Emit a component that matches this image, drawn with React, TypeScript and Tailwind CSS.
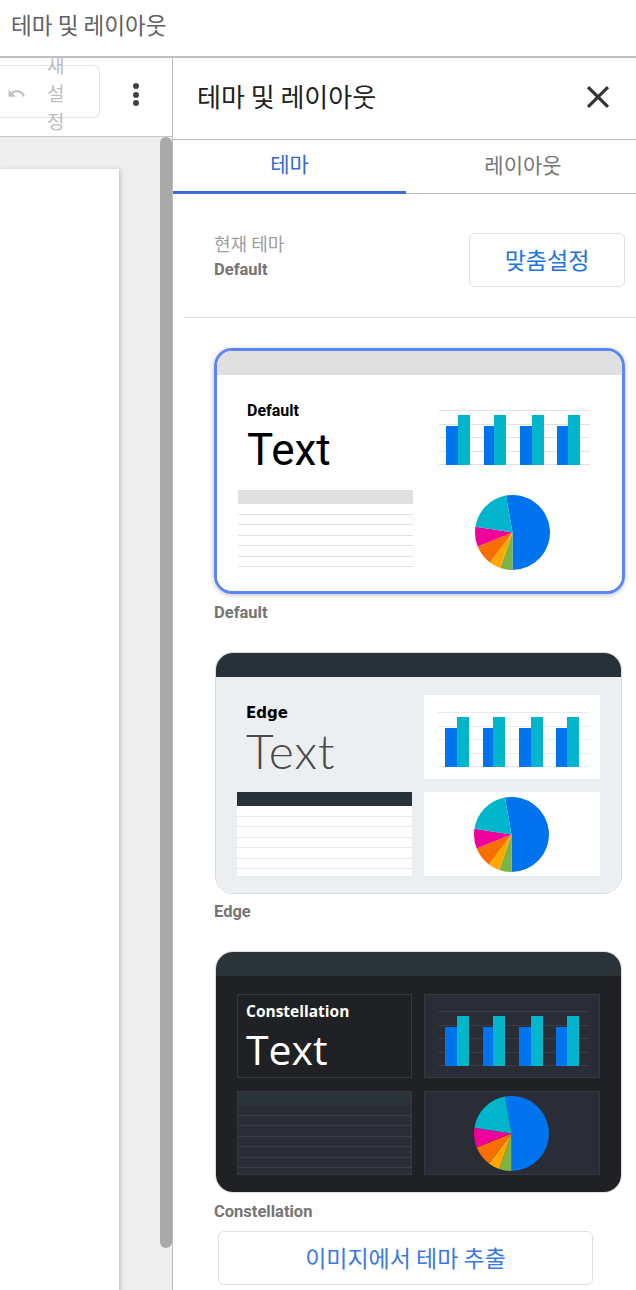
import React from "react";

const KR = "font-['Noto_Sans_CJK_KR',sans-serif]";

function polar(a: number, r = 37.5, cx = 87.5, cy = 42.5) {
  const t = (a * Math.PI) / 180;
  return [cx + r * Math.sin(t), cy - r * Math.cos(t)];
}
function slice(a: number, b: number) {
  const [x1, y1] = polar(a);
  const [x2, y2] = polar(b);
  const large = b - a > 180 ? 1 : 0;
  return `M87.5 42.5L${x1} ${y1}A37.5 37.5 0 ${large} 1 ${x2} ${y2}Z`;
}

function Pie() {
  return (
    <svg viewBox="0 0 176 84" className="block w-full h-full overflow-visible">
      <path d={slice(-10, 180)} fill="#0073ee" />
      <path d={slice(180, 199)} fill="#7cb342" />
      <path d={slice(199, 217)} fill="#ffa800" />
      <path d={slice(217, 248)} fill="#f76f00" />
      <path d={slice(248, 279)} fill="#f0009a" />
      <path d={slice(279, 350)} fill="#00b5cc" />
    </svg>
  );
}

function Bars({ line }: { line: string }) {
  const groups = [
    [21, 33, 45],
    [59, 69, 81],
    [95, 107, 119],
    [132, 143, 155],
  ];
  return (
    <svg viewBox="0 0 176 84" className="block w-full h-full">
      {[17.5, 31.5, 44.5, 58.5, 71.5].map((y) => (
        <rect key={y} x="14" y={y - 0.5} width="151" height="1" fill={line} />
      ))}
      {groups.map(([a, b, c]) => (
        <g key={a}>
          <rect x={a} y="33" width={b - a} height="39" fill="#0073ee" />
          <rect x={b} y="22" width={c - b} height="50" fill="#00b5cc" />
        </g>
      ))}
    </svg>
  );
}

function Table({ head, line, bg }: { head: string; line: string; bg: string }) {
  const rows = [11, 10, 11, 10, 11, 10];
  return (
    <div className={`h-full flex flex-col ${bg}`}>
      <div className={`h-[14px] shrink-0 ${head}`} />
      {rows.map((h, i) => (
        <div key={i} style={{ height: h }} className={`border-b ${line}`} />
      ))}
    </div>
  );
}

type ThemeProps = {
  name: string;
  frame: string;
  header: string;
  body: string;
  cell: string;
  nameCls: string;
  textCls: string;
  leftCell: string;
  line: string;
  tableHead: string;
  tableLine: string;
  tableBg: string;
  labelGap: string;
};

function ThemeCard(p: ThemeProps) {
  return (
    <div>
      <div className={`overflow-hidden ${p.frame}`}>
        <div className={`h-[24px] ${p.header}`} />
        <div className={`h-[216px] pl-[21px] pr-[21px] pt-[18px] ${p.body}`}>
          <div className="grid grid-cols-[175px_176px] grid-rows-[84px_84px] gap-x-[12px] gap-y-[13px]">
            <div className={`pl-[9px] pt-[8px] ${p.leftCell}`}>
              <div className={p.nameCls}>{p.name}</div>
              <div className={p.textCls}>Text</div>
            </div>
            <div className={p.cell}>
              <Bars line={p.line} />
            </div>
            <div className={p.cell}>
              <Table head={p.tableHead} line={p.tableLine} bg={p.tableBg} />
            </div>
            <div className={p.cell}>
              <Pie />
            </div>
          </div>
        </div>
      </div>
      <div className={`font-['Roboto',sans-serif] font-bold text-[16.5px] leading-[20px] text-[#757575] ${p.labelGap}`}>
        {p.name}
      </div>
    </div>
  );
}

export default function App() {
  return (
    <div className={`w-[636px] h-[1290px] overflow-hidden bg-white flex flex-col ${KR}`}>
      <header className="h-[58px] shrink-0 border-b-2 border-[#c0c0c0] pl-[11px] flex items-center pb-[7px] text-[22.6px] text-[#616161]">
        테마 및 레이아웃
      </header>
      <div className="flex-1 flex min-h-0">
        <aside className="w-[173px] shrink-0 border-r border-[#bdbdbd] flex flex-col">
          <div className="h-[79px] shrink-0 border-b border-[#c4c4c4] overflow-hidden flex items-start pt-[7px]">
            <div className="w-[100px] h-[53px] shrink-0 border border-[#e6e6e6] rounded-[6px] border-l-0 rounded-l-none flex items-center pl-[7px] gap-[21px]">
              <svg viewBox="0 0 24 24" className="w-[19px] h-[19px] shrink-0 mt-[3px]" fill="#bdbdbd">
                <path d="M12.5 8c-2.65 0-5.05.99-6.9 2.6L2 7v9h9l-3.62-3.62c1.39-1.16 3.16-1.88 5.12-1.88 3.54 0 6.55 2.31 7.6 5.5l2.37-.78C21.08 11.03 17.15 8 12.5 8z" />
              </svg>
              <span className="w-[19px] shrink-0 break-all text-[19px] leading-[28px] text-[#bdbdbd] mt-[3px]">새설정</span>
            </div>
            <div className="ml-[33px] mt-[18px] flex flex-col gap-[2.6px]">
              <span className="w-[6px] h-[6px] rounded-full bg-[#424242]" />
              <span className="w-[6px] h-[6px] rounded-full bg-[#424242]" />
              <span className="w-[6px] h-[6px] rounded-full bg-[#424242]" />
            </div>
          </div>
          <div className="flex-1 bg-[#eeeeee] flex justify-between pt-[32px] overflow-hidden">
            <div className="w-[119px] h-[1300px] bg-white shadow-[1px_1px_5px_rgba(0,0,0,0.22)]" />
            <div className="w-[12px] h-[1111px] -mt-[32px] rounded-full bg-[#a9a9a9]" />
          </div>
        </aside>
        <main className="flex-1 min-w-0 flex flex-col">
          <div className="h-[82px] shrink-0 border-b border-[#bdbdbd] flex items-center justify-between pl-[24px] pr-[19px] pb-[4px]">
            <span className="text-[26px] text-[#212121] -mt-[3px]">테마 및 레이아웃</span>
            <svg viewBox="0 0 24 24" className="w-[38px] h-[38px]" fill="#333333">
              <path d="M19 6.41L17.59 5 12 10.59 6.41 5 5 6.41 10.59 12 5 17.59 6.41 19 12 13.41 17.59 19 19 17.59 13.41 12z" />
            </svg>
          </div>
          <div className="h-[54px] shrink-0 border-b border-[#bdbdbd] flex text-[21px]">
            <div className="w-[233px] h-[54px] border-b-[3px] border-[#3b6bd4] text-[#3367d6] flex items-center justify-center pb-[4px]">테마</div>
            <div className="flex-1 text-[#757575] flex items-center justify-center pb-[4px] pl-[4px]">레이아웃</div>
          </div>
          <div className="h-[124px] shrink-0 flex items-start pl-[11px]">
            <div className="flex-1 border-b border-[#e0e0e0] h-[124px] flex items-start justify-between pl-[30px] pr-[11px] pt-[36px]">
              <div>
                <div className="text-[18px] leading-[26px] text-[#9e9e9e]">현재 테마</div>
                <div className="font-['Roboto',sans-serif] font-bold text-[16.5px] leading-[28px] text-[#757575]">Default</div>
              </div>
              <button className="w-[156px] h-[54px] mt-[3px] border border-[#e0e0e0] rounded-[6px] text-[23px] text-[#1a73e8] flex items-center justify-center pb-[2px]">맞춤설정</button>
            </div>
          </div>
          <div className="flex-1 pl-[41px] pt-[30px] flex flex-col">
            <div className="w-[411px] h-[274px]">
              <ThemeCard
                name="Default"
                frame="border-[3px] border-[#5c85f5] rounded-[18px] shadow-[0_1px_5px_rgba(0,0,0,0.25)]"
                header="bg-[#e0e0e0]"
                body="bg-white"
                cell="bg-white"
                leftCell="bg-white"
                nameCls="font-['Roboto',sans-serif] font-bold text-[16px] leading-[20px] text-black"
                textCls="font-['Roboto',sans-serif] text-[44px] leading-[58px] text-black"
                line="#e0e0e0"
                tableHead="bg-[#e0e0e0]"
                tableLine="border-[#e0e0e0]"
                tableBg="bg-white"
                labelGap="mt-[9px]"
              />
            </div>
            <div className="w-[407px] h-[269px] ml-[1px] mt-[30px]">
              <ThemeCard
                name="Edge"
                frame="border border-[#d9d9d9] rounded-[18px]"
                header="bg-[#263238]"
                body="bg-[#eceff1]"
                cell="bg-white"
                leftCell=""
                nameCls="font-['DejaVu_Sans',sans-serif] font-bold text-[15px] leading-[20px] text-black"
                textCls="font-['Lato',sans-serif] font-light text-[48px] leading-[58px] -mt-[1px] text-[#4a4a4a] tracking-[1px]"
                line="#e6e9eb"
                tableHead="bg-[#263238]"
                tableLine="border-[#e6e9eb]"
                tableBg="bg-white"
                labelGap="mt-[8px] -ml-[1px]"
              />
            </div>
            <div className="w-[407px] h-[270px] ml-[1px] mt-[30px]">
              <ThemeCard
                name="Constellation"
                frame="border border-[#dddddd] rounded-[18px]"
                header="bg-[#2a3439]"
                body="bg-[#202124]"
                cell="bg-[#2b2d36] outline-1 -outline-offset-1 outline-[#363840]"
                leftCell="outline-1 -outline-offset-1 outline-[#363840]"
                nameCls="font-['Open_Sans',sans-serif] font-bold text-[15.5px] leading-[20px] text-white -mt-[1px]"
                textCls="font-['Open_Sans',sans-serif] text-[41px] leading-[58px] text-white -mt-[1px]"
                line="#3a3c45"
                tableHead="bg-[#2a3439]"
                tableLine="border-[#3a3c45]"
                tableBg="bg-[#2b2d36]"
                labelGap="mt-[9px] -ml-[1px]"
              />
            </div>
            <button className="w-[375px] h-[54px] ml-[4px] mt-[10px] shrink-0 border border-[#e0e0e0] rounded-[6px] text-[23px] text-[#3b78e7] flex items-center justify-center pb-[2px]">
              이미지에서 테마 추출
            </button>
          </div>
        </main>
      </div>
    </div>
  );
}
